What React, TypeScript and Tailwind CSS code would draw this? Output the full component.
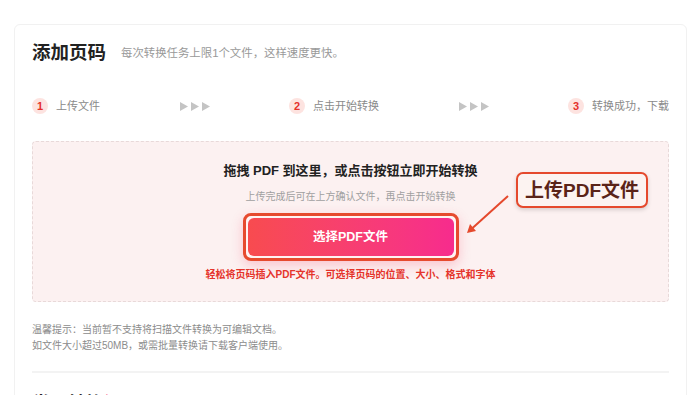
const font = { fontFamily: '"Liberation Sans", "Noto Sans CJK SC", sans-serif' };

function Arrows() {
  return (
    <div className="flex items-center gap-[3px]">
      {[0, 1, 2].map((i) => (
        <svg key={i} width="8" height="9" viewBox="0 0 8 9">
          <polygon points="0,0 8,4.5 0,9" fill="#c4c4c4" />
        </svg>
      ))}
    </div>
  );
}

function Step({ n, label }: { n: number; label: string }) {
  return (
    <div className="flex items-center gap-[8px]">
      <span className="flex h-[16px] w-[16px] items-center justify-center rounded-full bg-[#fde3e0] text-[11px] font-bold leading-none text-[#e5302b]">
        {n}
      </span>
      <span className="text-[11px] leading-[16px] text-[#8a8a8a]">{label}</span>
    </div>
  );
}

export default function App() {
  return (
    <div className="h-[395px] w-[700px] overflow-hidden bg-white px-[13px] pt-[24px]" style={font}>
      <div className="ml-[1px] rounded-md border border-[#f1f1f1] px-[17px] pt-[15px]">
        {/* header */}
        <div className="flex items-center">
          <h1 className="text-[18.5px] font-bold leading-[26px] text-[#222]">添加页码</h1>
          <p className="ml-[15px] text-[11.4px] leading-[16px] text-[#999]">
            每次转换任务上限1个文件，这样速度更快。
          </p>
        </div>

        {/* steps */}
        <div className="mt-[32px] flex items-center justify-between">
          <Step n={1} label="上传文件" />
          <Arrows />
          <Step n={2} label="点击开始转换" />
          <Arrows />
          <Step n={3} label="转换成功，下载" />
        </div>

        {/* drop zone */}
        <div className="relative mt-[27px] flex flex-col items-center rounded-[4px] border border-dashed border-[#e8d9d9] bg-[#fcf1f1] pb-[19px] pt-[20px]">
          <p className="text-[13px] font-bold leading-[18px] text-[#222]">
            拖拽 PDF 到这里，或点击按钮立即开始转换
          </p>
          <p className="mt-[10px] text-[10px] leading-[14px] text-[#a0a0a0]">
            上传完成后可在上方确认文件，再点击开始转换
          </p>
          <div className="mt-[9px] rounded-[8px] border-[3px] border-[#e64a2e] bg-[#fff3f3] p-[2px] shadow-[0_4px_12px_rgba(247,60,100,0.25)]">
            <button className="flex h-[38px] w-[206px] items-center justify-center rounded-[6px] bg-gradient-to-r from-[#f84b4f] to-[#f72b8d] text-[12.5px] font-bold text-white">
              选择PDF文件
            </button>
          </div>
          <p className="mt-[7px] text-[10px] font-bold leading-[14px] text-[#e5342b]">
            轻松将页码插入PDF文件。可选择页码的位置、大小、格式和字体
          </p>

          {/* annotation */}
          <div className="absolute left-[483px] top-[30px] flex h-[36px] w-[132px] items-center justify-center rounded-[7px] border-2 border-[#e5492d] bg-[#fcf3f1] shadow-[0_2px_4px_rgba(0,0,0,0.15)]">
            <span className="text-[19px] font-bold leading-none text-[#5a2318]">上传PDF文件</span>
          </div>
          <svg className="absolute left-[428px] top-[49px]" width="50" height="46" viewBox="0 0 50 46">
            <line x1="47" y1="5" x2="11" y2="37.5" stroke="#e5492d" strokeWidth="2" />
            <polygon points="6,42 15,40 9,33" fill="#e5492d" />
          </svg>
        </div>

        {/* tips */}
        <div className="mt-[20px] text-[10px] leading-[16px] text-[#8c8c8c]">
          <p>温馨提示：当前暂不支持将扫描文件转换为可编辑文档。</p>
          <p>如文件大小超过50MB，或需批量转换请下载客户端使用。</p>
        </div>

        <div className="mt-[17px] h-[2px] bg-[#f3f3f3]" />

        <h2 className="mt-[19px] text-[18px] font-bold leading-[24px] text-[#222]">
          常见转换<span className="text-[#f7306e]">问题</span>
        </h2>
      </div>
    </div>
  );
}
